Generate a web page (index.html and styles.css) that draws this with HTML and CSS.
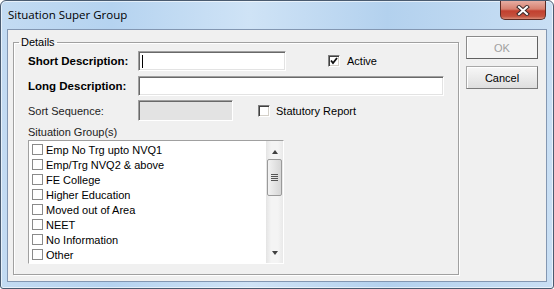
FILE: index.html
```html
<!DOCTYPE html>
<html lang="en">
<head>
    <meta charset="UTF-8">
    <title>Situation Super Group</title>
    <link rel="stylesheet" href="styles.css">
</head>
<body>
    <div class="window">
        <div class="titlebar">
            <span class="title">Situation Super Group</span>
            <div class="close">
                <svg width="14" height="11" viewBox="0 0 14 11">
                    <path d="M3 2 L11 9 M11 2 L3 9" stroke="#3b2a2a" stroke-width="4" stroke-linecap="square"/>
                    <path d="M3 2 L11 9 M11 2 L3 9" stroke="#fff" stroke-width="2" stroke-linecap="square"/>
                </svg>
            </div>
        </div>
        <div class="client">
            <fieldset class="details">
                <legend>Details</legend>

                <div class="row">
                    <span class="lbl bold">Short Description:</span>
                    <div class="txt short"><span class="caret"></span></div>
                    <div class="chk active-chk"><span class="box checked">
                        <svg width="8" height="8" viewBox="0 0 8 8"><path d="M1 3.5 L3 6 L7 1" stroke="#111" stroke-width="1.8" fill="none"/></svg>
                    </span>Active</div>
                </div>

                <div class="row r2">
                    <span class="lbl bold">Long Description:</span>
                    <div class="txt long"></div>
                </div>

                <div class="row r3">
                    <span class="lbl">Sort Sequence:</span>
                    <div class="txt sort"></div>
                    <div class="chk stat-chk"><span class="box"></span>Statutory Report</div>
                </div>

                <div class="list-label">Situation Group(s)</div>
                <div class="listbox">
                    <ul class="items">
                        <li><span class="box"></span>Emp No Trg upto NVQ1</li>
                        <li><span class="box"></span>Emp/Trg NVQ2 &amp; above</li>
                        <li><span class="box"></span>FE College</li>
                        <li><span class="box"></span>Higher Education</li>
                        <li><span class="box"></span>Moved out of Area</li>
                        <li><span class="box"></span>NEET</li>
                        <li><span class="box"></span>No Information</li>
                        <li><span class="box"></span>Other</li>
                    </ul>
                    <div class="scrollbar">
                        <span class="arrow up"></span>
                        <div class="thumb"><span class="grip"></span></div>
                        <span class="arrow down"></span>
                    </div>
                </div>
            </fieldset>

            <div class="buttons">
                <button class="btn ok" disabled>OK</button>
                <button class="btn cancel">Cancel</button>
            </div>
        </div>
    </div>
</body>
</html>
```

FILE: styles.css
```css
body {
    margin: 0;
    font-family: 'Liberation Sans', Arial, sans-serif;
    font-size: 11px;
    color: #000;
    background: #fff;
}
.window {
    width: 554px;
    height: 289px;
    box-sizing: border-box;
    border: 1px solid #4a5b70;
    border-radius: 6px 6px 3px 3px;
    background: linear-gradient(to right, #c3dbf2 0%, #b5d3f0 20%, #cfe3f6 45%, #b3d1ee 70%, #c9dff4 100%);
    padding: 0 6px 6px 6px;
    display: flex;
    flex-direction: column;
    box-shadow: inset 0 0 0 1px rgba(255,255,255,0.6);
}
.titlebar {
    height: 28px;
    display: flex;
    align-items: flex-start;
    justify-content: space-between;
}
.title {
    font-family: 'Open Sans', 'Liberation Sans', sans-serif;
    font-size: 11.5px;
    color: #000;
    margin-top: 6px;
    margin-left: 1px;
}
.close {
    width: 46px;
    height: 19px;
    margin-right: 1px;
    box-sizing: border-box;
    border: 1px solid #5c2c25;
    border-top: none;
    border-radius: 0 0 5px 5px;
    background: linear-gradient(to bottom, #e6ada2 0%, #d7806f 45%, #c2402f 55%, #c4523e 85%, #d98c78 100%);
    display: flex;
    align-items: center;
    justify-content: center;
}
.client {
    flex: 1;
    border: 1px solid #8397b2;
    background: #f0f0f0;
    display: flex;
    align-items: flex-start;
    padding: 6px 0 0 5px;
}
.details {
    margin: 0;
    width: 445px;
    height: 239px;
    box-sizing: border-box;
    border: 1px solid #a0a0a0;
    box-shadow: 1px 1px 0 #fff, inset 1px 1px 0 #fff;
    padding: 2px 14px 10px 14px;
}
.details legend {
    padding: 0 2px;
    margin-left: -9px;
    line-height: 13px;
    font-size: 11px;
}
.row {
    display: flex;
    align-items: center;
    height: 20px;
}
.r2 {
    margin-top: 5px;
}
.r3 {
    margin-top: 4px;
    height: 21px;
}
.lbl {
    width: 110px;
    flex-shrink: 0;
    color: #222;
}
.bold {
    font-weight: bold;
    font-size: 11.5px;
    color: #000;
}
.txt {
    height: 20px;
    box-sizing: border-box;
    background: #fff;
    border-top: 1px solid #a0a0a0;
    border-left: 1px solid #a0a0a0;
    border-right: 1px solid #fff;
    border-bottom: 1px solid #fff;
    box-shadow: inset 1px 1px 0 #696969, inset -1px -1px 0 #e3e3e3;
    position: relative;
}
.short { width: 148px; }
.long { width: 306px; }
.sort {
    width: 95px;
    height: 21px;
    background: #e3e3e3;
}
.caret {
    position: absolute;
    left: 3px;
    top: 3px;
    width: 1px;
    height: 13px;
    background: #000;
}
.chk {
    display: flex;
    align-items: center;
    gap: 7px;
}
.active-chk { margin-left: 42px; }
.stat-chk { margin-left: 25px; gap: 6px; }
.box {
    width: 12px;
    height: 12px;
    box-sizing: border-box;
    background: #fff;
    border-top: 1px solid #808080;
    border-left: 1px solid #808080;
    border-right: 1px solid #fff;
    border-bottom: 1px solid #fff;
    box-shadow: inset 1px 1px 0 #404040, inset -1px -1px 0 #d4d0c8;
    display: flex;
    align-items: center;
    justify-content: center;
    flex-shrink: 0;
}
.list-label {
    margin-top: 5px;
    line-height: 13px;
    color: #222;
}
.listbox {
    margin-top: 1px;
    width: 256px;
    height: 124px;
    box-sizing: border-box;
    border-top: 1px solid #a0a0a0;
    border-left: 1px solid #a0a0a0;
    border-right: 1px solid #fff;
    border-bottom: 1px solid #fff;
    background: #fff;
    display: flex;
}
.items {
    list-style: none;
    margin: 0;
    padding: 1px 0 0 3px;
    flex: 1;
}
.items li {
    height: 15px;
    display: flex;
    align-items: center;
    gap: 3px;
}
.items .box {
    width: 11px;
    height: 11px;
    border: 1px solid #8a8a8a;
    box-shadow: none;
}
.scrollbar {
    width: 17px;
    background: linear-gradient(to right, #e4e4e4, #f4f4f4 30%, #f4f4f4 70%, #e9e9e9);
    display: flex;
    flex-direction: column;
    align-items: center;
}
.arrow {
    width: 0;
    height: 0;
    border-left: 3.5px solid transparent;
    border-right: 3.5px solid transparent;
}
.arrow.up {
    margin-top: 9px;
    border-bottom: 4px solid #404040;
}
.arrow.down {
    margin-top: auto;
    margin-bottom: 8px;
    border-top: 4px solid #404040;
}
.thumb {
    margin-top: 5px;
    width: 15px;
    height: 37px;
    box-sizing: border-box;
    border: 1px solid #9a9a9a;
    border-radius: 2px;
    background: linear-gradient(to right, #f2f2f2, #e4e4e4 50%, #d6d6d6);
    display: flex;
    align-items: center;
    justify-content: center;
}
.grip {
    width: 7px;
    height: 7px;
    background: repeating-linear-gradient(to bottom, #555 0, #555 1px, transparent 1px, transparent 2px);
}
.buttons {
    margin-left: 7px;
    display: flex;
    flex-direction: column;
    gap: 7px;
}
.btn {
    width: 72px;
    height: 23px;
    box-sizing: border-box;
    font-family: 'Liberation Sans', Arial, sans-serif;
    font-size: 11px;
    padding: 0;
}
.ok {
    border: 1px solid #8a8a8a;
    border-bottom-color: #606060;
    border-right-color: #606060;
    background: #f4f4f4;
    color: #a0a0a0;
    box-shadow: inset 1px 1px 0 #fff;
}
.cancel {
    border: 1px solid #a9a9a9;
    border-bottom-color: #7a7a7a;
    border-right-color: #7a7a7a;
    background: linear-gradient(to bottom, #f7f7f7, #ebebeb 50%, #dedede);
    color: #000;
    box-shadow: inset 1px 1px 0 #fff;
}
```
